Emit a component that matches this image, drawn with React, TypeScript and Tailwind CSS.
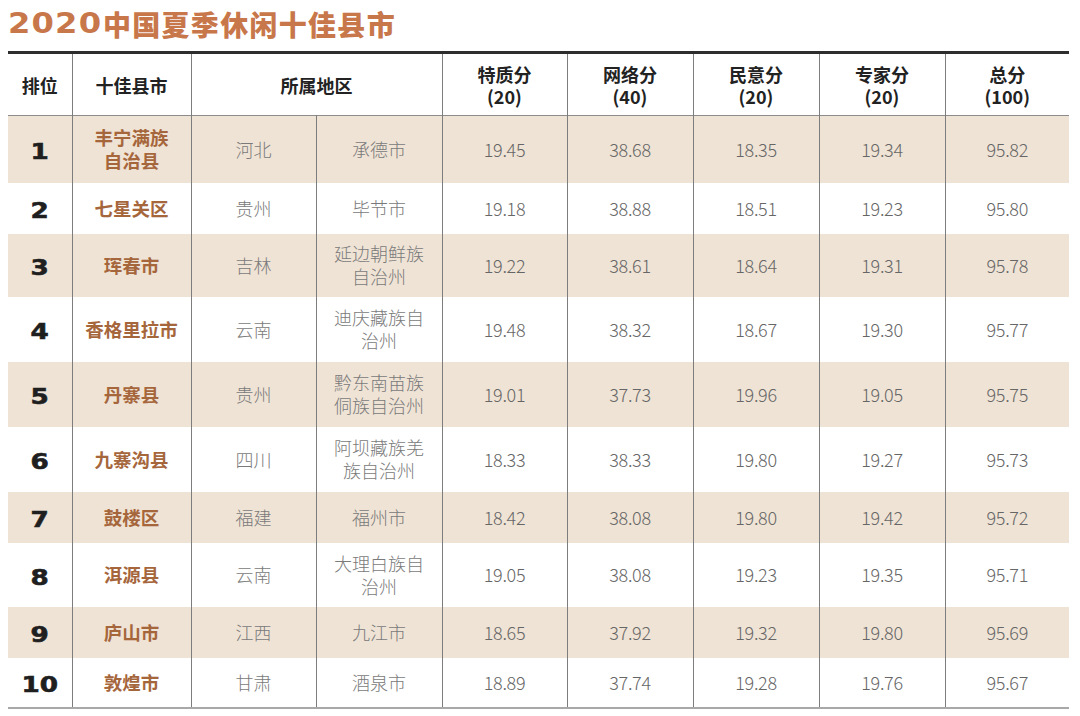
import React from 'react';

type Row = {
  rank: number;
  name: string[];
  province: string;
  city: string[];
  scores: string[];
  h: string;
};

const rows: Row[] = [
  { rank: 1, name: ['丰宁满族', '自治县'], province: '河北', city: ['承德市'], scores: ['19.45', '38.68', '18.35', '19.34', '95.82'], h: 'h-[67px]' },
  { rank: 2, name: ['七星关区'], province: '贵州', city: ['毕节市'], scores: ['19.18', '38.88', '18.51', '19.23', '95.80'], h: 'h-[51px]' },
  { rank: 3, name: ['珲春市'], province: '吉林', city: ['延边朝鲜族', '自治州'], scores: ['19.22', '38.61', '18.64', '19.31', '95.78'], h: 'h-[63px]' },
  { rank: 4, name: ['香格里拉市'], province: '云南', city: ['迪庆藏族自', '治州'], scores: ['19.48', '38.32', '18.67', '19.30', '95.77'], h: 'h-[65px]' },
  { rank: 5, name: ['丹寨县'], province: '贵州', city: ['黔东南苗族', '侗族自治州'], scores: ['19.01', '37.73', '19.96', '19.05', '95.75'], h: 'h-[65px]' },
  { rank: 6, name: ['九寨沟县'], province: '四川', city: ['阿坝藏族羌', '族自治州'], scores: ['18.33', '38.33', '19.80', '19.27', '95.73'], h: 'h-[65px]' },
  { rank: 7, name: ['鼓楼区'], province: '福建', city: ['福州市'], scores: ['18.42', '38.08', '19.80', '19.42', '95.72'], h: 'h-[51px]' },
  { rank: 8, name: ['洱源县'], province: '云南', city: ['大理白族自', '治州'], scores: ['19.05', '38.08', '19.23', '19.35', '95.71'], h: 'h-[64px]' },
  { rank: 9, name: ['庐山市'], province: '江西', city: ['九江市'], scores: ['18.65', '37.92', '19.32', '19.80', '95.69'], h: 'h-[51px]' },
  { rank: 10, name: ['敦煌市'], province: '甘肃', city: ['酒泉市'], scores: ['18.89', '37.74', '19.28', '19.76', '95.67'], h: 'h-[50px]' },
];

const scoreHeads = [
  ['特质分', '(20)'],
  ['网络分', '(40)'],
  ['民意分', '(20)'],
  ['专家分', '(20)'],
  ['总分', '(100)'],
];

const cjk = "font-['Noto_Sans_CJK_SC','Noto_Sans',sans-serif]";
const line = 'border-l border-l-[#7d7d7d]';

export default function App() {
  return (
    <div className={`w-[1080px] h-[716px] bg-white px-[8px] pt-[9px] ${cjk}`}>
      {/* Title */}
      <h1 className="flex items-center h-[30px] text-[28px] leading-[30px] font-black text-[#c8774b]">
        <span className="inline-block origin-left scale-x-[1.15] mr-[13px] font-['DejaVu_Sans',sans-serif] font-bold tracking-[1px]">
          2020
        </span>
        <span className="tracking-[1.3px]">中国夏季休闲十佳县市</span>
      </h1>

      <table className="mt-[12px] w-[1061px] table-fixed border-collapse border-t-[3px] border-t-[#2e2e2e] border-b-2 border-b-[#a8a8a8]">
        <colgroup>
          <col className="w-[64px]" />
          <col className="w-[119px]" />
          <col className="w-[125px]" />
          <col className="w-[126px]" />
          <col className="w-[125px]" />
          <col className="w-[126px]" />
          <col className="w-[126px]" />
          <col className="w-[126px]" />
          <col className="w-[124px]" />
        </colgroup>
        <thead>
          <tr className="h-[63px] border-b border-b-[#8c8c8c] text-[18px] leading-[22px] font-bold text-[#222]">
            <th className="p-0 font-bold">排位</th>
            <th className={`p-0 font-bold ${line}`}>十佳县市</th>
            <th colSpan={2} className={`p-0 font-bold ${line}`}>所属地区</th>
            {scoreHeads.map((h) => (
              <th key={h[0]} className={`p-0 font-bold ${line}`}>
                <div>{h[0]}</div>
                <div>{h[1]}</div>
              </th>
            ))}
          </tr>
        </thead>
        <tbody>
          {rows.map((r) => (
            <tr key={r.rank} className={`${r.h} ${r.rank % 2 === 1 ? 'bg-[#efe3d5]' : 'bg-white'}`}>
              <td className="p-0 pt-[6px] text-center">
                <div className="scale-x-[1.25] font-['DejaVu_Sans',sans-serif] font-extrabold text-[21px] leading-[24px] text-[#1f1f1f] [-webkit-text-stroke:0.6px_#1f1f1f]">
                  {r.rank}
                </div>
              </td>
              <td className={`p-0 text-center text-[18.5px] leading-[23px] font-bold text-[#a6663c] ${line}`}>
                {r.name.map((n) => (
                  <div key={n}>{n}</div>
                ))}
              </td>
              <td className={`p-0 text-center text-[18px] font-light text-[#7a7a7a] ${line}`}>{r.province}</td>
              <td className={`p-0 text-center text-[18px] leading-[23px] font-light text-[#7a7a7a] ${line}`}>
                {r.city.map((c) => (
                  <div key={c}>{c}</div>
                ))}
              </td>
              {r.scores.map((s, i) => (
                <td key={i} className={`p-0 text-center text-[18px] font-light tracking-[-0.3px] text-[#666] ${line}`}>
                  {s}
                </td>
              ))}
            </tr>
          ))}
        </tbody>
      </table>
    </div>
  );
}
